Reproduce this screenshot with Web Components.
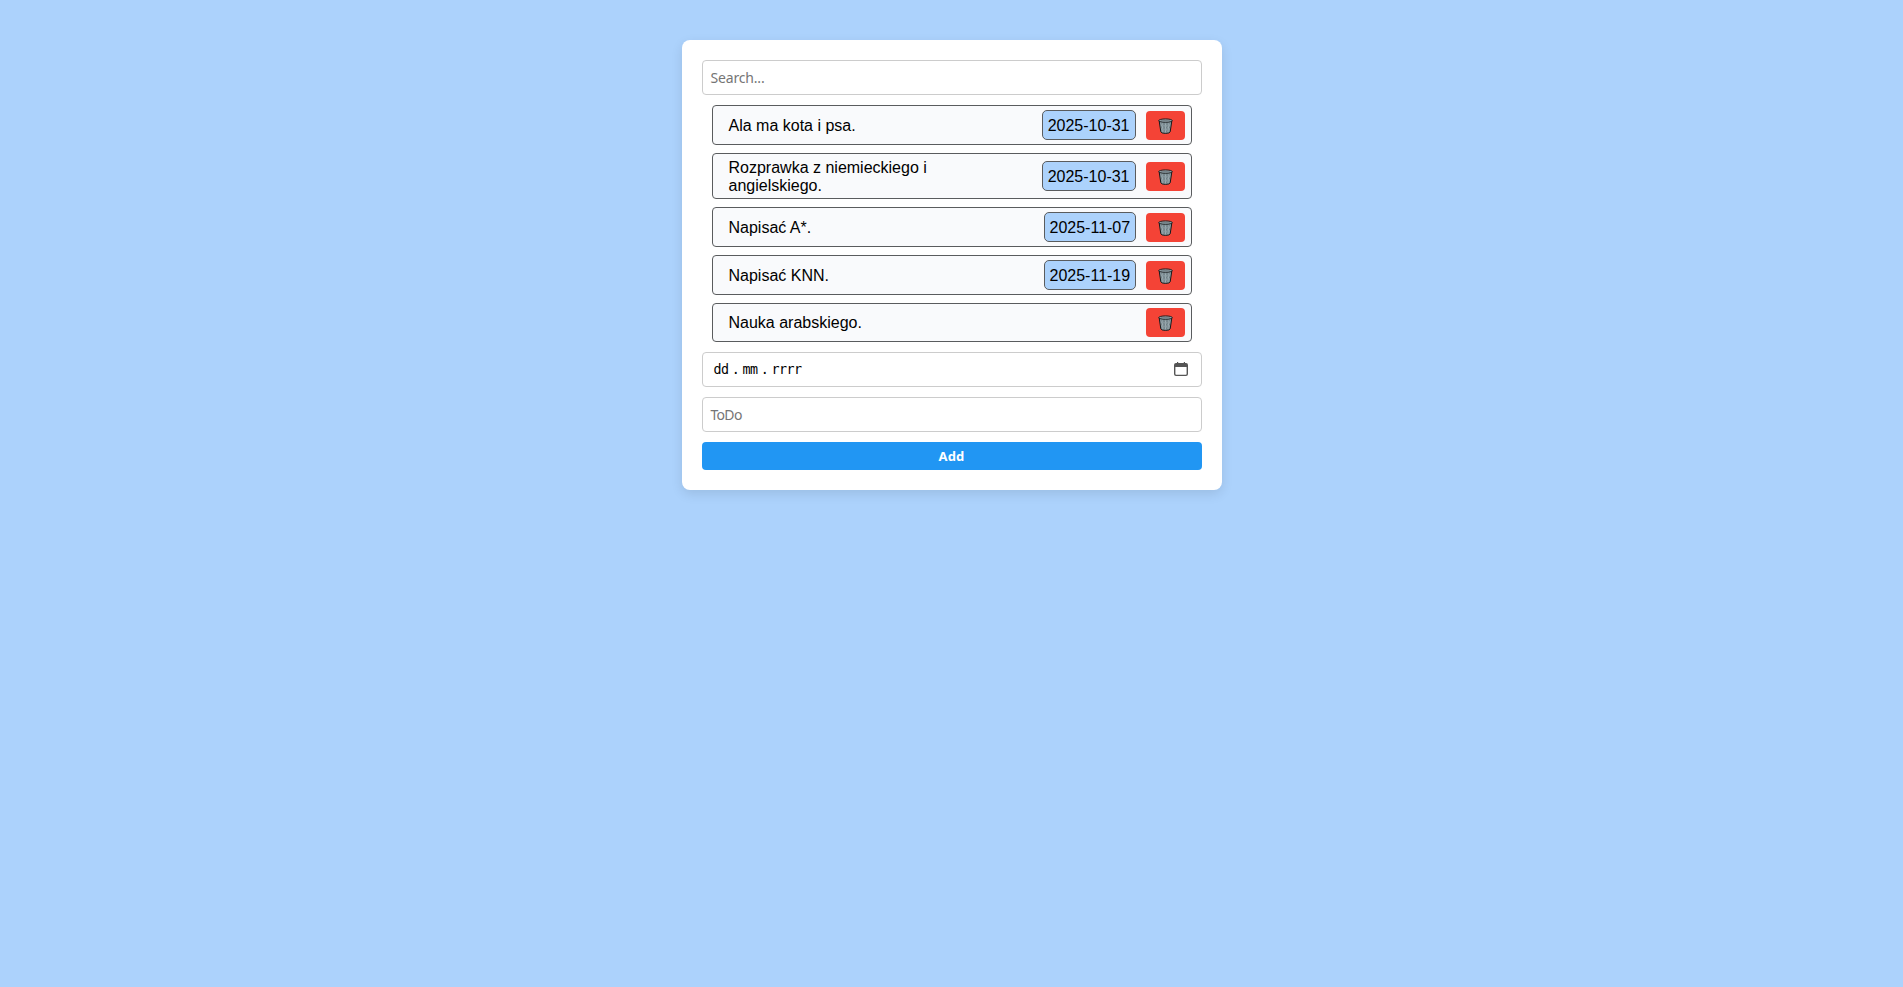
<!DOCTYPE html>
<html lang="pl">
<head>
<meta charset="utf-8">
<title>ToDo</title>
<style>
body{margin:0;min-height:100vh;background:#acd2fc;font-family:"Liberation Sans",Arial,sans-serif;font-size:16px;color:#000;overflow:hidden}
</style>
</head>
<body>
<todo-app></todo-app>
<script>
const define=(name,html)=>customElements.define(name,class extends HTMLElement{
  constructor(){super();this.attachShadow({mode:'open'}).innerHTML=html;}
});
define('trash-button',`<style>
:host{display:block;flex:none}
button{display:flex;align-items:flex-start;box-sizing:border-box;width:39px;height:29px;margin:0;border:0;border-radius:4px;background:#f44336;padding:7px 0 0 12px}
svg{display:block;flex:none}
</style><button aria-label="Usuń"><svg width="15" height="16" viewBox="0 0 15 16">
<path d="M1.2 3 L2.8 13.8 Q3.2 15.3 7.5 15.4 Q11.8 15.3 12.2 13.8 L13.8 3Z" fill="#8b9ba2" stroke="#15191a" stroke-width="1"/>
<path d="M3 5 L9 14 M5.5 5 L11.3 13.5 M8.5 5 L12 10 M3 8.5 L6.5 14 M12 5 L5.5 14 M9.5 5 L3.6 13 M6.5 5 L3.2 9.5 M12 8.5 L8.5 14" stroke="#607077" stroke-width=".5"/>
<path d="M4.1 6 L5 13.6 M7.5 6V14 M10.9 6 L10 13.6" stroke="#a9b8be" stroke-width=".6"/>
<ellipse cx="7.5" cy="2.6" rx="6.8" ry="1.7" fill="#93a2a8" stroke="#15191a" stroke-width=".9"/>
<ellipse cx="7.5" cy="2.8" rx="4.9" ry=".7" fill="#728187"/>
</svg></button>`);
define('due-date',`<style>
:host{display:block;flex:none;box-sizing:border-box;height:30px;border:1px solid #5a5c5e;border-radius:5px;padding:6px 5px 4px;line-height:18px;background:#acd2fc;margin-right:10px;white-space:nowrap}
:host([narrow]){width:92px}
</style><slot></slot>`);
define('todo-item',`<style>
:host{display:flex;align-items:center;box-sizing:border-box;min-height:39px;border:1px solid #5a5c5e;border-radius:4px;background:#f9fafc;padding:4px 6px 4px 16px;line-height:18px}
.text{flex:1}
:host([dated]) .text{padding-top:1px;margin-bottom:-1px}
:host([dated]) trash-button{padding-top:1px}
</style><div class="text"><slot></slot></div><slot name="due"></slot><trash-button></trash-button>`);
define('text-field',`<style>
:host{display:flex;align-items:center;box-sizing:border-box;height:35px;border:1px solid #ccc;border-radius:4px;padding:0 8px;background:#fff;color:#757575;font:14px "Noto Sans","Open Sans",sans-serif;letter-spacing:-.17px}
:host([tight]){letter-spacing:-.7px}
</style><slot></slot>`);
define('date-field',`<style>
:host{display:flex;align-items:center;box-sizing:border-box;height:35px;border:1px solid #ccc;border-radius:4px;padding:0 13px 0 11px;background:#fff;font:13.33px "DejaVu Sans Mono",monospace;letter-spacing:-.53px}
.parts{flex:1;display:flex}
.dot{width:14px;text-align:center}
</style><div class="parts"><span>dd</span><span class="dot">.</span><span>mm</span><span class="dot">.</span><span>rrrr</span></div>
<svg width="14" height="15" viewBox="0 0 14 15"><path d="M2 1H3V0H4.2V1H9.8V0H11V1H12Q14 1 14 3V12Q14 14 12 14H2Q0 14 0 12V3Q0 1 2 1ZM1.4 5V12Q1.4 12.7 2.1 12.7H11.9Q12.6 12.7 12.6 12V5Z" fill="#555" fill-rule="evenodd"/></svg>`);
define('add-button',`<style>
:host{display:block}
button{display:block;width:100%;height:28px;border:0;border-radius:4px;padding:0;background:#2196f3;color:#fff;font:bold 13px/28px "Noto Sans","Open Sans",sans-serif;letter-spacing:.15px}
</style><button><slot></slot></button>`);
define('todo-app',`<style>
:host{display:flow-root}
main{box-sizing:border-box;width:540px;margin:40px auto 0;padding:20px;background:#fff;border-radius:8px;box-shadow:0 4px 12px rgba(0,0,0,.1);display:flex;flex-direction:column;gap:10px}
.list{display:flex;flex-direction:column;gap:8px;padding:0 10px}
</style><main>
<text-field>Search...</text-field>
<div class="list">
<todo-item dated>Ala ma kota i psa.<due-date slot="due">2025-10-31</due-date></todo-item>
<todo-item dated>Rozprawka z niemieckiego i<br>angielskiego.<due-date slot="due">2025-10-31</due-date></todo-item>
<todo-item dated>Napisać A*.<due-date narrow slot="due">2025-11-07</due-date></todo-item>
<todo-item dated>Napisać KNN.<due-date narrow slot="due">2025-11-19</due-date></todo-item>
<todo-item>Nauka arabskiego.</todo-item>
</div>
<date-field></date-field>
<text-field tight>ToDo</text-field>
<add-button>Add</add-button>
</main>`);
</script>
</body>
</html>
